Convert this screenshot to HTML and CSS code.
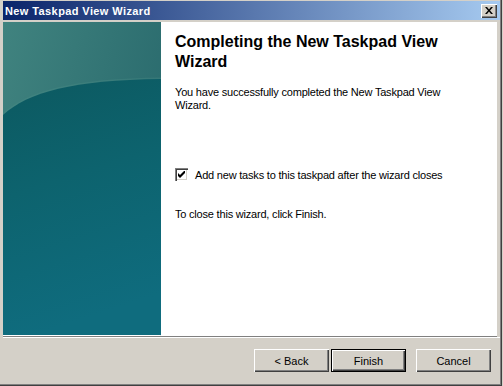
FILE: index.html
```html
<!DOCTYPE html>
<html lang="en">
<head>
<meta charset="UTF-8" />
<title>New Taskpad View Wizard</title>
<link rel="stylesheet" href="styles.css">
</head>
<body>

<div class="window">
<div class="titlebar">
<span class="title">New Taskpad View Wizard</span>
<div class="close-btn">
<svg width="8" height="7" viewBox="0 0 8 7">
<path d="M0 0h2l2 2.5L6 0h2L5 3.5 8 7H6L4 4.5 2 7H0l3-3.5z" fill="#000"/>
</svg>
</div>
</div>

<div class="content">
<div class="side-art">
<svg width="158" height="313" viewBox="0 0 158 313" preserveAspectRatio="none">
<defs>
<linearGradient id="top" x1="0" y1="0" x2="1" y2="0.5">
<stop offset="0" stop-color="#40837f"/>
<stop offset="1" stop-color="#296a6d"/>
</linearGradient>
<linearGradient id="low" x1="0" y1="0" x2="0.2" y2="1">
<stop offset="0" stop-color="#0c5960"/>
<stop offset="0.45" stop-color="#0d636e"/>
<stop offset="1" stop-color="#0f6c7e"/>
</linearGradient>
</defs>
<rect width="158" height="313" fill="url(#top)"/>
<path d="M0 93 C25 70 70 58 158 57" fill="none" stroke="#4a8c88" stroke-opacity="0.35" stroke-width="3"/>
<path d="M0 93 C25 70 70 58 158 57 L158 313 L0 313 Z" fill="url(#low)"/>
</svg>
</div>
<div class="page">
<h1>Completing the New Taskpad View Wizard</h1>
<p class="intro">You have successfully completed the New Taskpad View Wizard.</p>
<label class="check-row">
<span class="checkbox">
<svg width="7" height="7" viewBox="0 0 7 7">
<path d="M0 2v3l2 2 5-5V-1L2 4z" fill="#000"/>
</svg>
</span>
Add new tasks to this taskpad after the wizard closes
</label>
<p class="outro">To close this wizard, click Finish.</p>
</div>
</div>

<div class="footer">
<button class="btn">&lt; Back</button>
<button class="btn default">Finish</button>
<button class="btn cancel">Cancel</button>
</div>
</div>

</body>
</html>
```

FILE: styles.css
```css
* { box-sizing: border-box; }

html, body {
margin: 0; padding: 0;
width: 503px; height: 386px;
overflow: hidden;
background: #d4d0c8;
font-family: "Liberation Sans", Arial, sans-serif;
font-size: 11px;
}

.window {
width: 503px; height: 386px;
display: flex; flex-direction: column;
background: #d4d0c8;
padding: 1px 2px 3px 3px;
border-left: 1px solid #ffffff;
box-shadow: inset -1px -1px 0 #404040, inset -2px -2px 0 #808080;
margin-left: -1px;
}

.titlebar {
height: 19px;
display: flex; align-items: center; justify-content: space-between;
padding: 0 3px 0 2px;
background: linear-gradient(to right, #0a246a, #a6caf0);
}

.title {
color: #fff;
font-weight: bold;
font-size: 11px;
letter-spacing: 0.4px;
}

.close-btn {
width: 16px; height: 14px;
background: #d4d0c8;
display: flex; justify-content: center; align-items: center;
box-shadow: inset 1px 1px 0 #fff, inset -1px -1px 0 #404040, inset -2px -2px 0 #808080;
}

.content {
flex: 1;
display: flex;
margin-top: 2px;
margin-right: 3px;
background: #fff;
border-bottom: 1px solid #808080;
}

.side-art {
width: 158px;
flex: none;
line-height: 0;
border-right: 1px solid #e8eef0;
}

.page {
flex: 1;
padding: 10px 14px 0 14px;
color: #000;
}

.page h1 {
margin: 0 0 14px;
font-size: 16px;
line-height: 20px;
font-weight: bold;
}

.intro {
max-width: 280px;
margin: 0 0 56px;
line-height: 13px;
letter-spacing: -0.2px;
}

.check-row {
display: flex; align-items: center;
gap: 7px;
letter-spacing: -0.2px;
}

.checkbox {
width: 13px; height: 13px;
background: #fff;
display: flex; justify-content: center; align-items: center;
box-shadow: inset 1px 1px 0 #808080, inset 2px 2px 0 #404040, inset -1px -1px 0 #fff, inset -2px -2px 0 #d4d0c8;
}

.outro {
margin: 27px 0 0;
letter-spacing: -0.2px;
}

.footer {
height: 46px;
border-top: 1px solid #fff;
display: flex; justify-content: flex-end; align-items: center;
gap: 2px;
padding-right: 9px;
}

.btn {
width: 75px; height: 23px;
font-family: inherit; font-size: 11px;
color: #000;
background: #d4d0c8;
border: none;
box-shadow: inset 1px 1px 0 #fff, inset -1px -1px 0 #404040, inset -2px -2px 0 #808080;
}

.btn.default {
box-shadow: inset 0 0 0 1px #000, inset 2px 2px 0 #fff, inset -2px -2px 0 #404040, inset -3px -3px 0 #808080;
}

.btn.cancel {
margin-left: 8px;
}
```
